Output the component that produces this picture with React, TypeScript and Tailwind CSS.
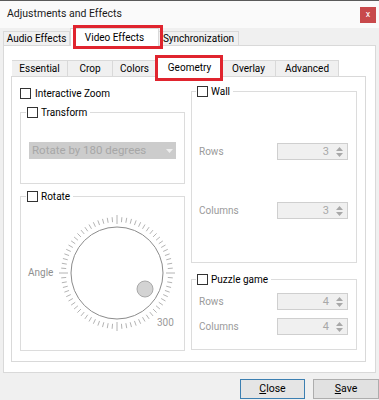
import React from "react";

const FONT = "font-['Roboto','Liberation_Sans',sans-serif]";

function Box() {
  return <span className="inline-block w-[11px] h-[11px] border border-[#333333] bg-white shrink-0" />;
}

function Spin({ value }: { value: string }) {
  return (
    <div className="w-[71px] h-[17px] border border-[#cfcfcf] bg-[#f0f0f0] flex items-center">
      <span className="flex-1 text-right pr-[5px] text-[#a8a8a8] text-[11px]">{value}</span>
      <div className="w-[11px] h-full flex flex-col items-center justify-center gap-[2px] mr-[2px]">
        <svg width="7" height="4" viewBox="0 0 7 4"><path d="M0 4 L3.5 0 L7 4 Z" fill="#a8a8a8" /></svg>
        <svg width="7" height="4" viewBox="0 0 7 4"><path d="M0 0 L3.5 4 L7 0 Z" fill="#a8a8a8" /></svg>
      </div>
    </div>
  );
}

function Dial() {
  const ticks = [];
  for (let i = 0; i < 72; i++) {
    const a = (i * 5 * Math.PI) / 180;
    const major = i % 18 === 0;
    const r1 = major ? 49 : 51;
    const r2 = major ? 58 : 56;
    ticks.push(
      <line
        key={i}
        x1={60 + r1 * Math.sin(a)}
        y1={60 - r1 * Math.cos(a)}
        x2={60 + r2 * Math.sin(a)}
        y2={60 - r2 * Math.cos(a)}
        stroke="#b4b4b4"
        strokeWidth="1"
      />
    );
  }
  return (
    <svg width="120" height="120" viewBox="0 0 120 120">
      {ticks}
      <circle cx="60" cy="60" r="46" fill="white" stroke="#8c8c8c" strokeWidth="1" />
      <circle cx="88" cy="76" r="8" fill="#d3d3d3" stroke="#a9a9a9" strokeWidth="1" />
      <text x="100" y="113" fontSize="10" fill="#9a9a9a" fontFamily="Roboto, sans-serif">300</text>
    </svg>
  );
}

const tab = "h-[16px] border border-b-0 border-l-0 border-[#d9d9d9] bg-[#f0f0f0] flex items-center justify-center whitespace-nowrap";

export default function App() {
  return (
    <div className={`${FONT} w-[379px] h-[400px] bg-[#f0f0f0] relative overflow-hidden text-[10px] text-black leading-none`}>
      {/* title bar */}
      <div className="h-[28px] bg-[#fafafa] border-t border-[#5a5a5a] flex items-center justify-between pl-[7px] pr-[3px]">
        <span className="text-[10.5px] text-[#1a1a1a]">Adjustments and Effects</span>
        <div className="w-[16px] h-[16px] bg-[#c8494b] text-white text-[9px] flex items-center justify-center">x</div>
      </div>

      {/* top tabs */}
      <div className="h-[17px] pl-[3px] flex items-end">
        <div className="w-[67px] h-[14px] border border-b-0 border-[#d9d9d9] bg-[#f0f0f0] flex items-center justify-center whitespace-nowrap">Audio Effects</div>
        <div className="w-[89px] h-[18px] border border-b-0 border-[#d9d9d9] bg-white flex items-center justify-center whitespace-nowrap relative z-10 -mb-px">Video Effects</div>
        <div className="w-[80px] h-[14px] border border-b-0 border-l-0 border-[#d9d9d9] bg-[#f0f0f0] flex items-center justify-center whitespace-nowrap">Synchronization</div>
      </div>

      {/* outer panel */}
      <div className="mx-[3px] h-[328px] bg-white border border-[#d9d9d9] pt-[11px] pl-[7px]">
        {/* inner tabs */}
        <div className="h-[19px] pl-[1px] flex items-end">
          <div className={`w-[56px] ${tab} border-l`}>Essential</div>
          <div className={`w-[45px] ${tab}`}>Crop</div>
          <div className={`w-[44px] ${tab}`}>Colors</div>
          <div className="w-[65px] h-[20px] border border-b-0 border-[#d9d9d9] bg-white flex items-center justify-center relative z-10 -mb-px">Geometry</div>
          <div className={`w-[54px] ${tab}`}>Overlay</div>
          <div className={`w-[63px] ${tab}`}>Advanced</div>
        </div>

        {/* inner panel */}
        <div className="w-[355px] h-[286px] border border-[#d9d9d9] bg-white flex pl-[8px] pr-[8px] gap-[6px]">
          {/* left column */}
          <div className="w-[165px] flex flex-col">
            <div className="mt-[11px] flex items-center gap-[4px]">
              <Box />
              <span>Interactive Zoom</span>
            </div>
            <fieldset className="mt-[7px] h-[78px] border border-[#dcdcdc]">
              <legend className="ml-[5px] px-[1px] pr-[3px] flex items-center gap-[3px] h-[13px]">
                <Box />
                <span>Transform</span>
              </legend>
              <div className="mt-[23px] ml-[8px] w-[147px] h-[17px] bg-[#cccccc] flex items-center justify-between px-[3px] text-[#a7a7a7] text-[11.5px]">
                <span>Rotate by 180 degrees</span>
                <svg width="7" height="4" viewBox="0 0 7 4"><path d="M0 0 L3.5 4 L7 0 Z" fill="#eeeeee" /></svg>
              </div>
            </fieldset>
            <fieldset className="mt-[6px] h-[161px] border border-[#dcdcdc]">
              <legend className="ml-[5px] px-[1px] pr-[3px] flex items-center gap-[3px] h-[13px]">
                <Box />
                <span>Rotate</span>
              </legend>
              <div className="flex items-center mt-[10px]">
                <span className="ml-[7px] w-[29px] text-[#8f8f8f]">Angle</span>
                <Dial />
              </div>
            </fieldset>
          </div>

          {/* right column */}
          <div className="w-[166px] flex flex-col">
            <fieldset className="mt-[8px] h-[178px] border border-[#dcdcdc]">
              <legend className="ml-[4px] px-[1px] pr-[3px] flex items-center gap-[3px] h-[13px]">
                <Box />
                <span>Wall</span>
              </legend>
              <div className="mt-[45px] ml-[7px] mr-[8px] flex items-center justify-between text-[#9a9a9a]">
                <span>Rows</span>
                <Spin value="3" />
              </div>
              <div className="mt-[42px] ml-[7px] mr-[8px] flex items-center justify-between text-[#9a9a9a]">
                <span>Columns</span>
                <Spin value="3" />
              </div>
            </fieldset>
            <fieldset className="mt-[10px] h-[77px] border border-[#dcdcdc]">
              <legend className="ml-[4px] px-[1px] pr-[3px] flex items-center gap-[3px] h-[13px]">
                <Box />
                <span>Puzzle game</span>
              </legend>
              <div className="mt-[7px] ml-[7px] mr-[8px] flex items-center justify-between text-[#9a9a9a]">
                <span>Rows</span>
                <Spin value="4" />
              </div>
              <div className="mt-[8px] ml-[7px] mr-[8px] flex items-center justify-between text-[#9a9a9a]">
                <span>Columns</span>
                <Spin value="4" />
              </div>
            </fieldset>
          </div>
        </div>
      </div>

      {/* buttons */}
      <div className="flex justify-end gap-[8px] mt-[6px]">
        <button className="w-[65px] h-[20px] border border-[#3c7fb1] bg-[#e5e5e5] text-[10.5px]">
          <span className="underline">C</span>lose
        </button>
        <button className="w-[66px] h-[20px] border border-[#adadad] bg-[#e1e1e1] text-[10.5px]">
          <span className="underline">S</span>ave
        </button>
      </div>

      {/* annotation boxes */}
      <div className="absolute left-[73px] top-[25px] w-[90px] h-[24px] border-[3px] border-[#e0242e] z-20" />
      <div className="absolute left-[155px] top-[55px] w-[68px] h-[26px] border-[3px] border-[#e0242e] z-20" />
    </div>
  );
}
